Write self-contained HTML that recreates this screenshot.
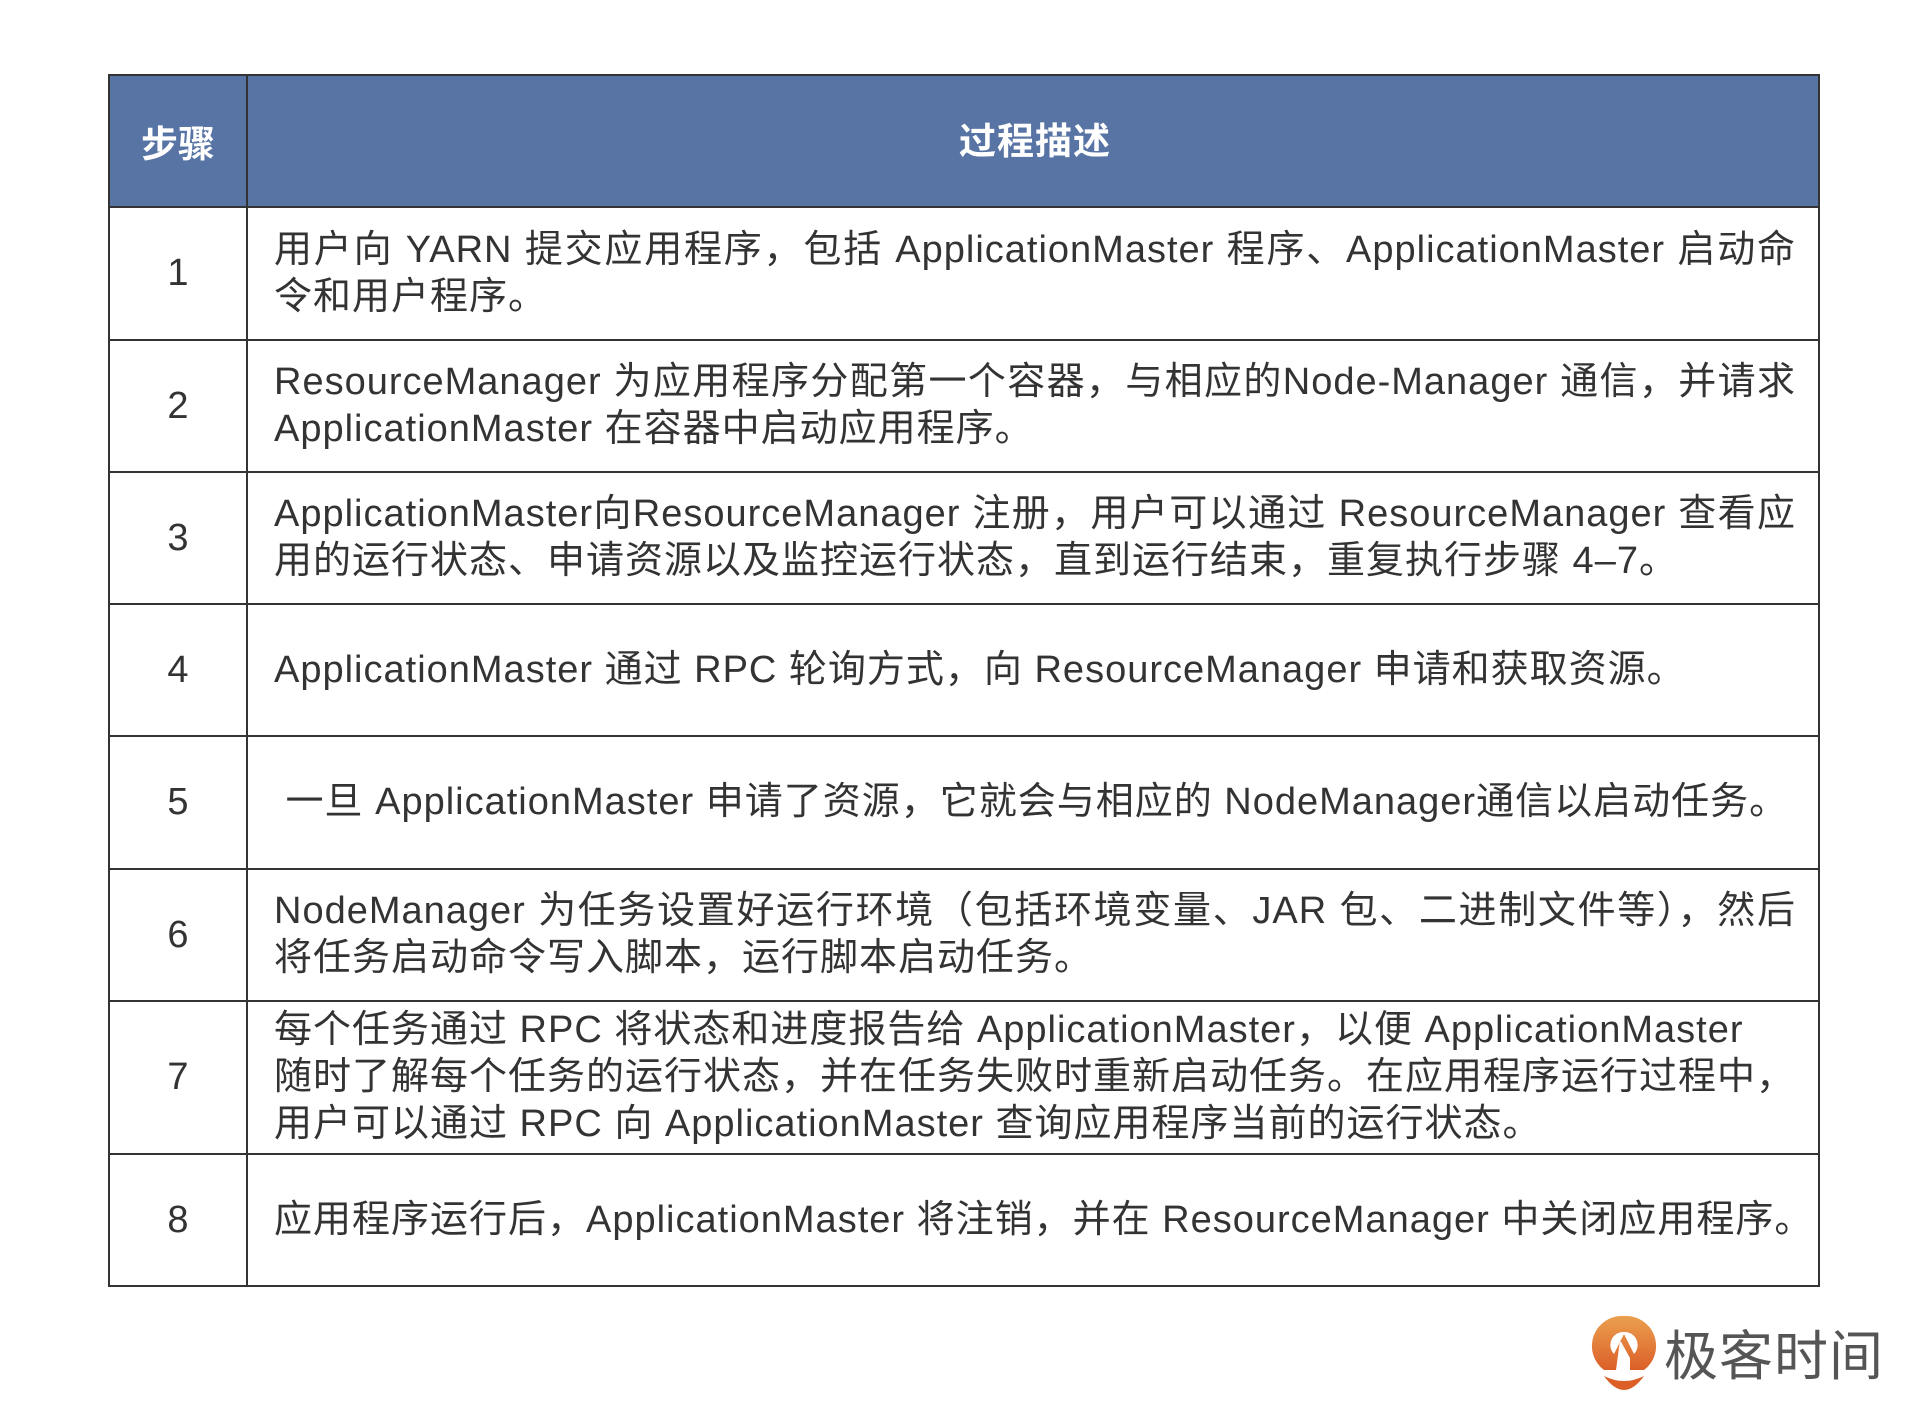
<!DOCTYPE html>
<html><head><meta charset="utf-8"><style>
body{margin:0;width:1929px;height:1423px;background:#fff;position:relative;font-family:"Liberation Sans","Noto Sans CJK SC",sans-serif;color:#333;overflow:hidden}
.t{position:absolute;left:108px;top:74px;width:1712px;border:2px solid #333;box-sizing:border-box}
.r{display:flex;border-top:2px solid #333;box-sizing:border-box}
.r:first-child{border-top:none}
.n{width:136px;border-right:2px solid #333;display:flex;align-items:center;justify-content:center;font-size:38px;flex:none}
.d{flex:1;display:flex;flex-direction:column;justify-content:center;padding:0 22px 0 26px;font-size:38px;line-height:47px;letter-spacing:1px}
.d div{white-space:nowrap;text-align:left}
.d div.j{text-align:justify;text-align-last:justify}
.h{background:#5874a4;color:#fff;font-weight:bold}
.h .n,.h .d{font-size:37px}
.h .d{align-items:center}
</style></head><body>
<div class="t">
<div class="r h" style="height:130px"><div class="n">步骤</div><div class="d">过程描述</div></div>
<div class="r" style="height:133px"><div class="n">1</div><div class="d"><div class="j">用户向 YARN 提交应用程序，包括 ApplicationMaster 程序、ApplicationMaster 启动命</div><div>令和用户程序。</div></div></div>
<div class="r" style="height:132px"><div class="n">2</div><div class="d"><div class="j">ResourceManager 为应用程序分配第一个容器，与相应的Node-Manager 通信，并请求</div><div>ApplicationMaster 在容器中启动应用程序。</div></div></div>
<div class="r" style="height:132px"><div class="n">3</div><div class="d"><div class="j">ApplicationMaster向ResourceManager 注册，用户可以通过 ResourceManager 查看应</div><div>用的运行状态、申请资源以及监控运行状态，直到运行结束，重复执行步骤 4–7。</div></div></div>
<div class="r" style="height:132px"><div class="n">4</div><div class="d"><div>ApplicationMaster 通过 RPC 轮询方式，向 ResourceManager 申请和获取资源。</div></div></div>
<div class="r" style="height:133px"><div class="n">5</div><div class="d"><div>&nbsp;一旦 ApplicationMaster 申请了资源，它就会与相应的 NodeManager通信以启动任务。</div></div></div>
<div class="r" style="height:132px"><div class="n">6</div><div class="d"><div class="j">NodeManager 为任务设置好运行环境（包括环境变量、JAR 包、二进制文件等），然后</div><div>将任务启动命令写入脚本，运行脚本启动任务。</div></div></div>
<div class="r" style="height:153px"><div class="n">7</div><div class="d"><div>每个任务通过 RPC 将状态和进度报告给 ApplicationMaster，以便 ApplicationMaster</div><div>随时了解每个任务的运行状态，并在任务失败时重新启动任务。在应用程序运行过程中，</div><div>用户可以通过 RPC 向 ApplicationMaster 查询应用程序当前的运行状态。</div></div></div>
<div class="r" style="height:132px"><div class="n">8</div><div class="d"><div>应用程序运行后，ApplicationMaster 将注销，并在 ResourceManager 中关闭应用程序。</div></div></div>
</div>
<svg style="position:absolute;left:1590px;top:1314px" width="68" height="76" viewBox="0 0 68 76">
<defs><linearGradient id="g" x1="0" y1="0" x2="0" y2="1"><stop offset="0" stop-color="#eba050"/><stop offset="1" stop-color="#dc5f28"/></linearGradient></defs>
<path d="M34 2A30 30 0 0 0 14 56L26 56 L30 26 L40 44 L40 56 L54 56 A30 30 0 0 0 34 2Z M34 18A13 13 0 0 1 44 40 L34 20 L24 40 A13 13 0 0 1 34 18Z" fill="url(#g)" fill-rule="evenodd"/>
<path d="M14 62Q34 72 54 62Q44 76 34 76Q24 76 14 62Z" fill="#dc5f28"/>
</svg>
<div style="position:absolute;left:1664px;top:1322px;font-size:54px;color:#555;font-family:'Noto Sans CJK SC',sans-serif;line-height:60px;letter-spacing:1px">极客时间</div>
</body></html>
